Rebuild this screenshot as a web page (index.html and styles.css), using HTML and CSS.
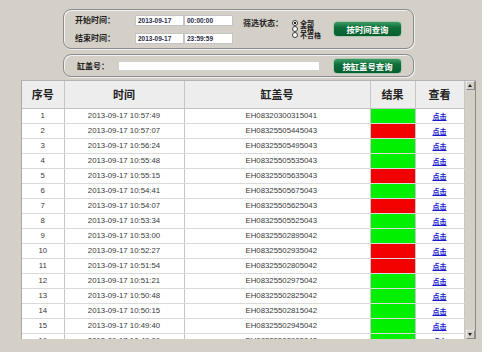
FILE: index.html
```html
<!DOCTYPE html>
<html lang="zh-CN">
<head>
    <meta charset="UTF-8">
    <meta name="viewport" content="width=device-width, initial-scale=1.0">
    <title>缸盖检测记录</title>
    <link rel="stylesheet" href="styles.css">
</head>
<body>
    <div class="filters">
        <div class="panel panel-time">
            <div class="time-grid">
                <span class="label">开始时间：</span>
                <input class="field" type="text" value="2013-09-17">
                <input class="field" type="text" value="00:00:00">
                <span class="label">结束时间：</span>
                <input class="field" type="text" value="2013-09-17">
                <input class="field" type="text" value="23:59:59">
            </div>
            <span class="label status-label">筛选状态：</span>
            <div class="radios">
                <label class="radio-item"><span class="radio checked"></span>全部</label>
                <label class="radio-item"><span class="radio"></span>合格</label>
                <label class="radio-item"><span class="radio"></span>不合格</label>
            </div>
            <button class="btn" type="button">按时间查询</button>
        </div>
        <div class="panel panel-code">
            <span class="label code-label">缸盖号：</span>
            <input class="field code-field" type="text">
            <button class="btn" type="button">按缸盖号查询</button>
        </div>
    </div>

    <div class="grid-box">
        <table class="grid">
            <colgroup>
                <col class="c-no">
                <col class="c-time">
                <col class="c-code">
                <col class="c-result">
                <col class="c-view">
            </colgroup>
            <thead>
                <tr>
                    <th>序号</th>
                    <th>时间</th>
                    <th>缸盖号</th>
                    <th>结果</th>
                    <th>查看</th>
                </tr>
            </thead>
            <tbody id="rows"></tbody>
        </table>
        <div class="scrollbar">
            <span class="arrow up"></span>
            <span class="arrow down"></span>
        </div>
    </div>

    <script>
        // 检测记录
        var records = [
            ['10:57:49', 'EH08320300315041', 1],
            ['10:57:07', 'EH08325505445043', 0],
            ['10:56:24', 'EH08325505495043', 1],
            ['10:55:48', 'EH08325505535043', 1],
            ['10:55:15', 'EH08325505635043', 0],
            ['10:54:41', 'EH08325505675043', 1],
            ['10:54:07', 'EH08325505625043', 0],
            ['10:53:34', 'EH08325505525043', 1],
            ['10:53:00', 'EH08325502895042', 1],
            ['10:52:27', 'EH08325502935042', 0],
            ['10:51:54', 'EH08325502805042', 0],
            ['10:51:21', 'EH08325502975042', 1],
            ['10:50:48', 'EH08325502825042', 1],
            ['10:50:15', 'EH08325502815042', 1],
            ['10:49:40', 'EH08325502945042', 1],
            ['10:49:06', 'EH08325502905042', 1]
        ]
        var rows = document.getElementById('rows')
        var html = ''
        for (var i = 0; i < records.length; i++) {
            var r = records[i]
            html += '<tr>' +
                '<td>' + (i + 1) + '</td>' +
                '<td>2013-09-17 ' + r[0] + '</td>' +
                '<td class="code">' + r[1] + '</td>' +
                '<td class="' + (r[2] ? 'ok' : 'ng') + '"></td>' +
                '<td><a class="view" href="#">点击</a></td>' +
                '</tr>'
        }
        rows.innerHTML = html
    </script>
</body>
</html>
```

FILE: styles.css
```css
* {
    box-sizing: border-box;
}

body {
    margin: 0;
    background-color: #d4d0c8;
    font-family: "Liberation Sans", "Noto Sans CJK SC", sans-serif;
    color: #222;
}

.filters {
    width: 351px;
    margin: 9px 0 0 63px;
}

.panel {
    display: flex;
    align-items: center;
    padding-right: 11px;
    border: 1px solid #8c8c8c;
    border-radius: 8px;
    box-shadow: inset 1px 1px 0 #f2f2f2, 1px 1px 0 #efefef;
}

.panel-time {
    height: 40px;
    padding-left: 11px;
}

.panel-code {
    height: 23px;
    margin-top: 5px;
    padding-left: 13px;
}

.label {
    font-family: "Noto Sans CJK SC", sans-serif;
    font-weight: bold;
    font-size: 8px;
    line-height: 10px;
    white-space: nowrap;
    color: #1e1e1e;
}

.time-grid {
    display: grid;
    grid-template-columns: 60px 49px 49px;
    row-gap: 7px;
    align-items: center;
}

.field {
    display: block;
    height: 11px;
    margin: 0;
    padding: 0 2px;
    border: 1px solid #c4c4c4;
    background-color: #fff;
    font-family: "Liberation Sans", sans-serif;
    font-weight: bold;
    font-size: 6.5px;
    color: #2a2a4a;
    outline: none;
}

.status-label {
    align-self: flex-start;
    margin: 8px 0 0 10px;
}

.radios {
    display: flex;
    flex-direction: column;
    margin-left: 9px;
}

.radio-item {
    display: flex;
    align-items: center;
    height: 6px;
    font-family: "Noto Sans CJK SC", sans-serif;
    font-weight: bold;
    font-size: 7px;
    line-height: 6px;
    color: #1e1e1e;
}

.radio {
    width: 6px;
    height: 6px;
    margin-right: 2px;
    border: 1px solid #3c3c3c;
    border-radius: 50%;
    background-color: #fff;
}

.radio.checked {
    background: radial-gradient(circle, #222 1px, #fff 1.5px);
}

.btn {
    width: 69px;
    height: 16px;
    margin-left: auto;
    padding: 0;
    border: 1px solid #a9c9b2;
    border-radius: 4px;
    background: linear-gradient(#3e9a63, #0e6f3a 40%, #075e2e);
    font-family: "Noto Sans CJK SC", sans-serif;
    font-weight: bold;
    font-size: 8.4px;
    color: #fff;
}

.code-label {
    width: 41px;
}

.code-field {
    width: 202px;
    height: 10px;
    border-color: #cfcfcf;
}

.grid-box {
    display: flex;
    width: 455px;
    height: 259px;
    margin: 3px 0 0 21px;
    border-top: 1px solid #b4b4b4;
    border-left: 1px solid #a8a8a8;
    overflow: hidden;
}

.grid {
    width: 442px;
    flex: 0 0 442px;
    table-layout: fixed;
    border-collapse: collapse;
    background-color: #fff;
}

.c-no { width: 42px; }
.c-time { width: 120px; }
.c-code { width: 186px; }
.c-result { width: 45px; }
.c-view { width: 49px; }

.grid th {
    height: 27px;
    padding: 0;
    background-color: #ededed;
    border-right: 1px solid #c6c6c6;
    border-bottom: 1px solid #c2c2c2;
    font-family: "Noto Sans CJK SC", sans-serif;
    font-weight: bold;
    font-size: 11px;
    color: #222;
}

.grid td {
    height: 15px;
    padding: 0;
    border-right: 1px solid #c6c6c6;
    border-bottom: 1px solid #dadada;
    text-align: center;
    font-size: 7.8px;
    color: #3a3a3a;
    white-space: nowrap;
}

.grid td.code {
    text-align: left;
    padding-left: 61px;
}

.grid td.ok {
    background-color: #00f000;
}

.grid td.ng {
    background-color: #f20000;
}

.view {
    font-family: "Noto Sans CJK SC", sans-serif;
    font-weight: bold;
    font-size: 7px;
    color: #1515d0;
    text-decoration: underline;
}

.scrollbar {
    display: flex;
    flex-direction: column;
    justify-content: space-between;
    width: 11px;
    flex: 0 0 11px;
    border-right: 1px solid #8a8a8a;
    background-color: #d4d0c8;
}

.arrow {
    position: relative;
    display: block;
    width: 9px;
    height: 9px;
    margin-left: 1px;
    border: 1px solid #e8e8e8;
    border-right-color: #8a8a8a;
    border-bottom-color: #8a8a8a;
}

.arrow::after {
    content: "";
    position: absolute;
    left: 1px;
    border-left: 2.5px solid transparent;
    border-right: 2.5px solid transparent;
}

.arrow.up::after {
    top: 2px;
    border-bottom: 3px solid #222;
}

.arrow.down::after {
    top: 2px;
    border-top: 3px solid #222;
}
```
